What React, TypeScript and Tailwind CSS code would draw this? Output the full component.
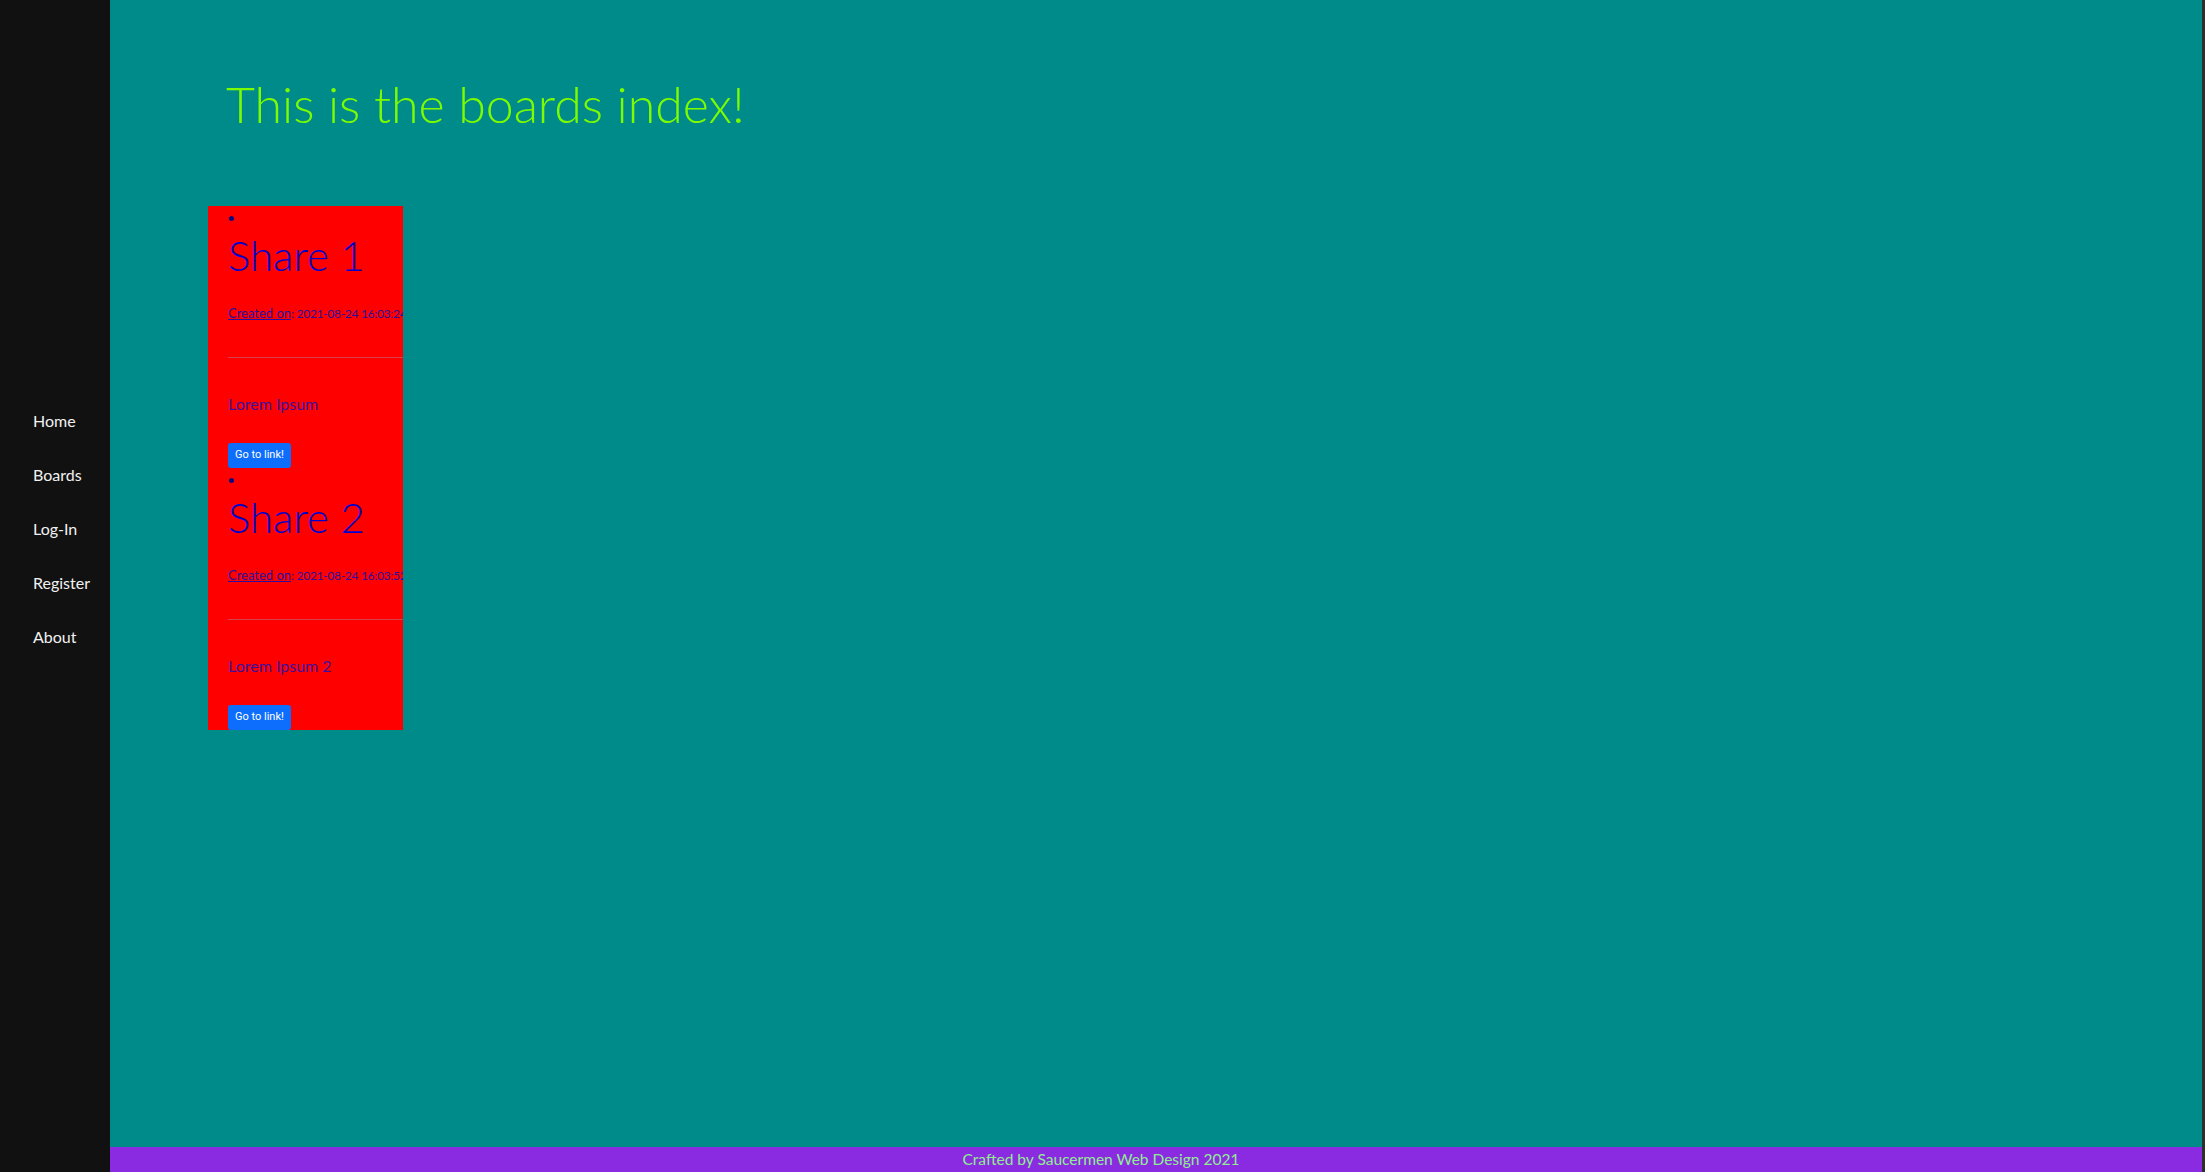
const navLinks = ['Home', 'Boards', 'Log-In', 'Register', 'About'];

const shares = [
  { title: 'Share 1', created: '2021-08-24 16:03:24', body: 'Lorem Ipsum' },
  { title: 'Share 2', created: '2021-08-24 16:03:52', body: 'Lorem Ipsum 2' },
];

function ShareItem({ title, created, body }: { title: string; created: string; body: string }) {
  return (
    <li className="w-[260px]">
      <div className="h-6 flex items-center">
        <span className="block w-[5px] h-[5px] rounded-full bg-[#0a0a80] ml-[1px]" />
      </div>
      <h2 className="text-[42px] leading-[50px] font-light text-[#0000cd]">{title}</h2>
      <p className="mt-[23px] text-[13px] leading-[21px] text-[#2a0fa0] whitespace-nowrap">
        <a href="#" className="underline">Created on</a>
        <span className="text-[12px] tracking-[-0.3px]">: {created}</span>
      </p>
      <hr className="mt-[33px] border-0 border-t border-[#d8404c]" />
      <p className="mt-[34px] text-[16px] leading-6 text-[#3a10a0]">{body}</p>
      <button
        type="button"
        className="mt-[27px] h-[25px] px-[7px] rounded-[3px] bg-[#0d6efd] text-white text-[11px] font-['Roboto',sans-serif]"
      >
        Go to link!
      </button>
    </li>
  );
}

export default function App() {
  return (
    <div className="flex h-screen w-full font-['Lato','Noto_Sans',sans-serif]">
      {/* sidebar */}
      <nav className="w-[110px] shrink-0 bg-[#111111] pt-[409px]">
        <ul className="flex flex-col gap-[30px] pl-[33px]">
          {navLinks.map((l) => (
            <li key={l}>
              <a href="#" className="block text-[16px] leading-6 text-[#f1f1f1]">{l}</a>
            </li>
          ))}
        </ul>
      </nav>

      <div className="flex-1 flex flex-col min-w-0">
        <main className="flex-1 bg-[#008b8b] overflow-hidden">
          <h1 className="mt-[73px] ml-[116px] text-[50px] leading-[62px] font-light text-[#7cfc00]">
            This is the boards index!
          </h1>
          <ul className="mt-[71px] ml-[98px] w-[195px] bg-[#ff0000] px-[20px] overflow-hidden">
            {shares.map((s) => (
              <ShareItem key={s.title} {...s} />
            ))}
          </ul>
        </main>
        <footer className="h-[25px] bg-[#8a2be2] pr-[110px] flex items-center justify-center text-[15.5px] text-[#90ee90]">
          Crafted by Saucermen Web Design 2021
        </footer>
      </div>

      <div className="w-[3px] shrink-0 bg-[#2e2e2e]" />
    </div>
  );
}
